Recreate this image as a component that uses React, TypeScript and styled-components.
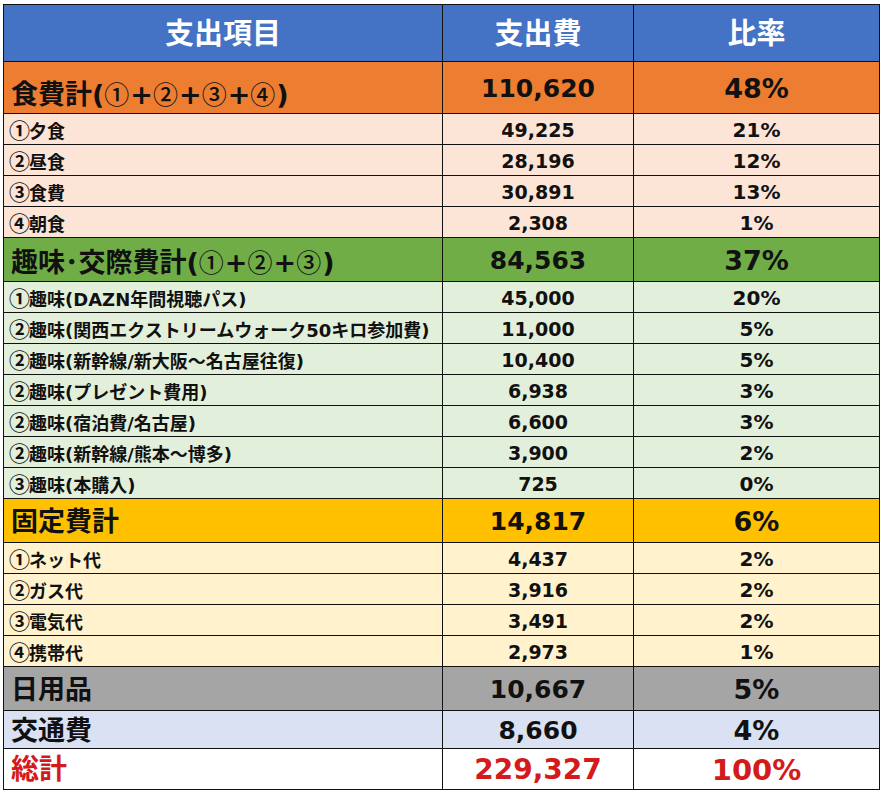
import React from "react";
import styled, { createGlobalStyle } from "styled-components";

const GlobalStyle = createGlobalStyle`
  html, body {
    margin: 0;
    padding: 0;
    background: #ffffff;
  }
  body {
    font-family: "DejaVu Sans", "Noto Sans CJK JP", sans-serif;
    color: #111111;
  }
`;

type Kind = "head" | "group" | "item" | "total";

interface Row {
  kind: Kind;
  label: string;
  amount: string;
  rate: string;
  height: number;
  bg: string;
  bottom?: boolean;
}

const FOOD = "#ED7D31";
const FOOD_LIGHT = "#FCE4D6";
const HOBBY = "#70AD47";
const HOBBY_LIGHT = "#E2EFDA";
const FIXED = "#FFC000";
const FIXED_LIGHT = "#FFF2CC";

const rows: Row[] = [
  { kind: "group", label: "食費計(①+②+③+④)", amount: "110,620", rate: "48%", height: 52, bg: FOOD, bottom: true },
  { kind: "item", label: "①夕食", amount: "49,225", rate: "21%", height: 31, bg: FOOD_LIGHT },
  { kind: "item", label: "②昼食", amount: "28,196", rate: "12%", height: 31, bg: FOOD_LIGHT },
  { kind: "item", label: "③食費", amount: "30,891", rate: "13%", height: 31, bg: FOOD_LIGHT },
  { kind: "item", label: "④朝食", amount: "2,308", rate: "1%", height: 31, bg: FOOD_LIGHT },
  { kind: "group", label: "趣味･交際費計(①+②+③)", amount: "84,563", rate: "37%", height: 44, bg: HOBBY, bottom: true },
  { kind: "item", label: "①趣味(DAZN年間視聴パス)", amount: "45,000", rate: "20%", height: 31, bg: HOBBY_LIGHT },
  { kind: "item", label: "②趣味(関西エクストリームウォーク50キロ参加費)", amount: "11,000", rate: "5%", height: 31, bg: HOBBY_LIGHT },
  { kind: "item", label: "②趣味(新幹線/新大阪～名古屋往復)", amount: "10,400", rate: "5%", height: 31, bg: HOBBY_LIGHT },
  { kind: "item", label: "②趣味(プレゼント費用)", amount: "6,938", rate: "3%", height: 31, bg: HOBBY_LIGHT },
  { kind: "item", label: "②趣味(宿泊費/名古屋)", amount: "6,600", rate: "3%", height: 31, bg: HOBBY_LIGHT },
  { kind: "item", label: "②趣味(新幹線/熊本～博多)", amount: "3,900", rate: "2%", height: 31, bg: HOBBY_LIGHT },
  { kind: "item", label: "③趣味(本購入)", amount: "725", rate: "0%", height: 31, bg: HOBBY_LIGHT },
  { kind: "group", label: "固定費計", amount: "14,817", rate: "6%", height: 44, bg: FIXED },
  { kind: "item", label: "①ネット代", amount: "4,437", rate: "2%", height: 31, bg: FIXED_LIGHT },
  { kind: "item", label: "②ガス代", amount: "3,916", rate: "2%", height: 31, bg: FIXED_LIGHT },
  { kind: "item", label: "③電気代", amount: "3,491", rate: "2%", height: 31, bg: FIXED_LIGHT },
  { kind: "item", label: "④携帯代", amount: "2,973", rate: "1%", height: 31, bg: FIXED_LIGHT },
  { kind: "group", label: "日用品", amount: "10,667", rate: "5%", height: 44, bg: "#A5A5A5" },
  { kind: "group", label: "交通費", amount: "8,660", rate: "4%", height: 38, bg: "#D9E1F2" },
  { kind: "total", label: "総計", amount: "229,327", rate: "100%", height: 41, bg: "#FFFFFF" },
];

const labelSize: Record<Kind, number> = { head: 29, group: 27, item: 18, total: 28 };
const amountSize: Record<Kind, number> = { head: 29, group: 25, item: 19, total: 28 };
const rateSize: Record<Kind, number> = { head: 29, group: 27, item: 20, total: 29 };
const textColor: Record<Kind, string> = {
  head: "#FFFFFF",
  group: "#111111",
  item: "#111111",
  total: "#D41A1A",
};

const Page = styled.div`
  padding: 4px 0 0 3px;
`;

const Table = styled.div`
  width: 877px;
  border-top: 1px solid #111;
  border-left: 1px solid #111;
  box-sizing: border-box;
`;

const TableRow = styled.div<{ $height: number; $bg: string }>`
  display: grid;
  grid-template-columns: 439px 191px 246px;
  height: ${(p) => p.$height}px;
  background: ${(p) => p.$bg};
`;

const Cell = styled.div<{
  $kind: Kind;
  $align: "left" | "center";
  $size: number;
  $bottom?: boolean;
}>`
  box-sizing: border-box;
  border-right: 1px solid #111;
  border-bottom: 1px solid #111;
  display: flex;
  align-items: ${(p) => (p.$bottom ? "flex-end" : "center")};
  justify-content: ${(p) => (p.$align === "left" ? "flex-start" : "center")};
  padding-left: ${(p) => (p.$align === "left" ? (p.$kind === "item" ? 5 : 7) : 0)}px;
  padding-bottom: ${(p) => (p.$bottom ? 5 : 0)}px;
  padding-top: ${(p) => (p.$bottom ? 0 : 2)}px;
  font-size: ${(p) => p.$size}px;
  font-weight: 700;
  color: ${(p) => textColor[p.$kind]};
  white-space: nowrap;
  overflow: hidden;
  line-height: 1;
`;

const Circled = styled.span<{ $group: boolean }>`
  font-family: "Noto Sans CJK JP", sans-serif;
  font-size: ${(p) => (p.$group ? 25 : 21)}px;
  font-weight: ${(p) => (p.$group ? 500 : 700)};
  margin-right: ${(p) => (p.$group ? 1 : -1)}px;
`;

const Label: React.FC<{ text: string; group: boolean }> = ({ text, group }) => (
  <span>
    {text.split(/([①-⑳])/).map((part, i) =>
      /^[①-⑳]$/.test(part) ? (
        <Circled key={i} $group={group}>
          {part}
        </Circled>
      ) : (
        <React.Fragment key={i}>{part}</React.Fragment>
      )
    )}
  </span>
);

const App: React.FC = () => {
  return (
    <Page>
      <GlobalStyle />
      <Table>
        <TableRow $height={57} $bg="#4472C4">
          <Cell $kind="head" $align="center" $size={labelSize.head}>支出項目</Cell>
          <Cell $kind="head" $align="center" $size={labelSize.head}>支出費</Cell>
          <Cell $kind="head" $align="center" $size={labelSize.head}>比率</Cell>
        </TableRow>
        {rows.map((r) => (
          <TableRow key={r.label} $height={r.height} $bg={r.bg}>
            <Cell $kind={r.kind} $align="left" $size={labelSize[r.kind]} $bottom={r.bottom}>
              <Label text={r.label} group={r.kind === "group"} />
            </Cell>
            <Cell $kind={r.kind} $align="center" $size={amountSize[r.kind]}>
              {r.amount}
            </Cell>
            <Cell $kind={r.kind} $align="center" $size={rateSize[r.kind]}>
              {r.rate}
            </Cell>
          </TableRow>
        ))}
      </Table>
    </Page>
  );
};

export default App;
